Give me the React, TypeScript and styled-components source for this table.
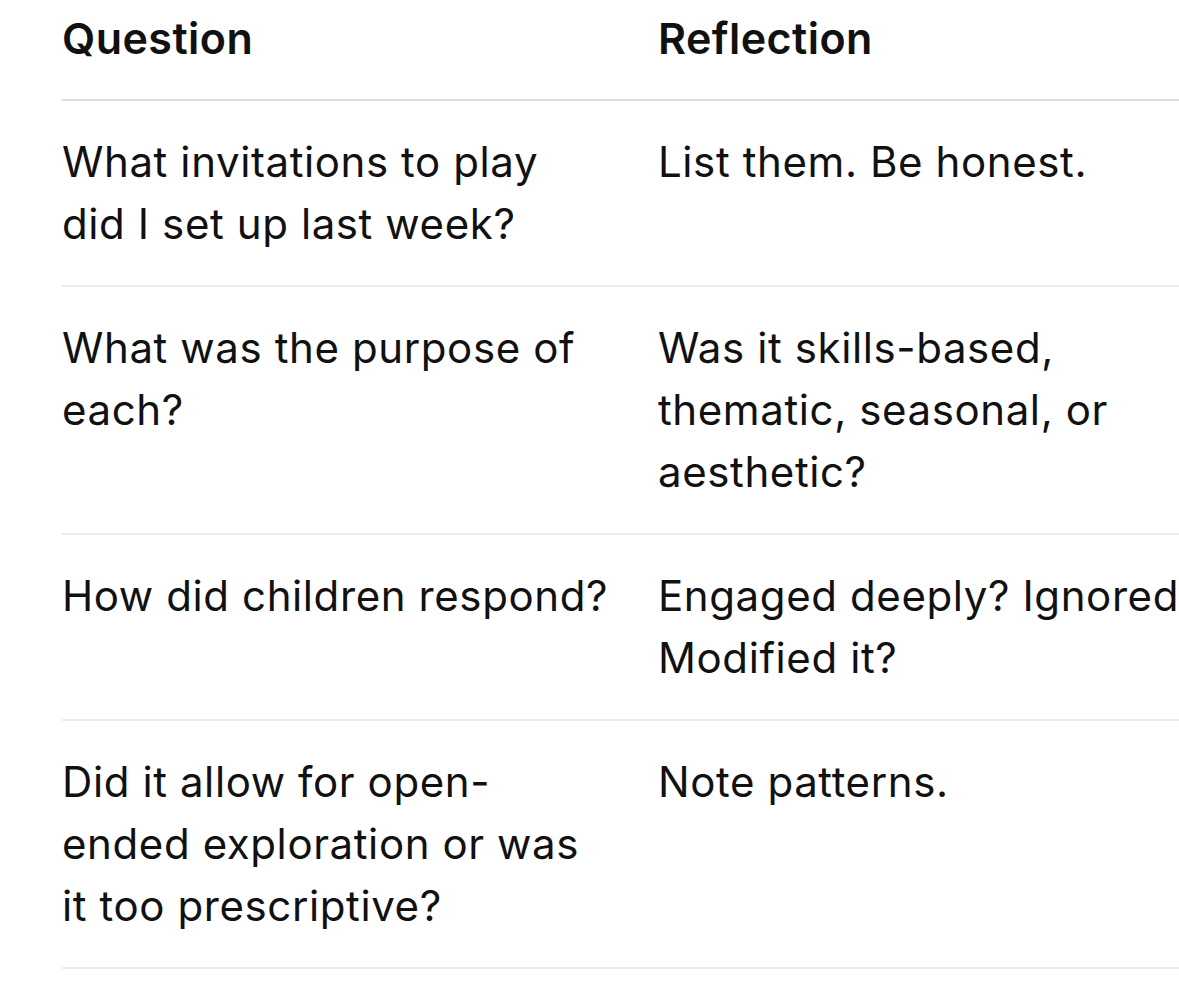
import React from "react";
import styled, { createGlobalStyle } from "styled-components";

const GlobalStyle = createGlobalStyle`
  html, body {
    margin: 0;
    padding: 0;
    background: #ffffff;
    overflow: hidden;
  }
  body {
    font-family: Inter, "Noto Sans", "Liberation Sans", sans-serif;
    color: #111111;
    -webkit-font-smoothing: antialiased;
  }
`;

const Page = styled.div`
  width: 1179px;
  height: 984px;
  overflow: hidden;
  padding-left: 62px;
  box-sizing: border-box;
`;

const Table = styled.div`
  display: flex;
  flex-direction: column;
  width: 1400px;
`;

const Row = styled.div<{ $header?: boolean }>`
  display: grid;
  grid-template-columns: 596px 700px;
  border-bottom: 2px solid ${(p) => (p.$header ? "#dedede" : "#ececec")};
  padding: ${(p) => (p.$header ? "7px 0 30px" : "30px 0 30px")};
`;

const Cell = styled.div<{ $header?: boolean }>`
  font-size: ${(p) => (p.$header ? "43px" : "42px")};
  font-weight: ${(p) => (p.$header ? 600 : 400)};
  line-height: 62px;
  letter-spacing: ${(p) => (p.$header ? "0.45px" : "0.6px")};
  white-space: pre-line;
`;

const rows: [string, string][] = [
  ["What invitations to play\ndid I set up last week?", "List them. Be honest."],
  ["What was the purpose of\neach?", "Was it skills-based,\nthematic, seasonal, or\naesthetic?"],
  ["How did children respond?", "Engaged deeply? Ignored?\nModified it?"],
  [
    "Did it allow for open-\nended exploration or was\nit too prescriptive?",
    "Note patterns.",
  ],
];

export default function App() {
  return (
    <>
      <GlobalStyle />
      <Page>
        <Table>
          <Row $header>
            <Cell $header>Question</Cell>
            <Cell $header>Reflection</Cell>
          </Row>
          {rows.map(([q, r]) => (
            <Row key={q}>
              <Cell>{q}</Cell>
              <Cell>{r}</Cell>
            </Row>
          ))}
        </Table>
      </Page>
    </>
  );
}
